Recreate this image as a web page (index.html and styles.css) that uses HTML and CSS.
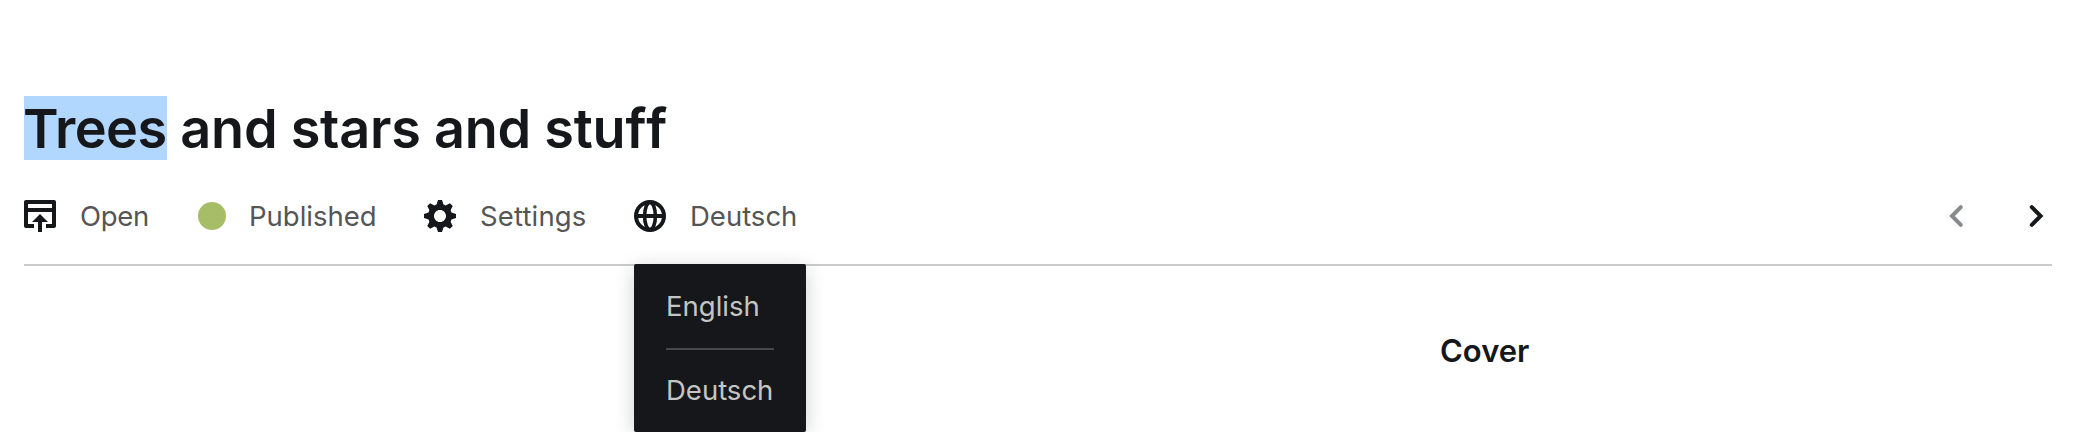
FILE: index.html
```html
<!DOCTYPE html>
<html lang="en">
<head>
<meta charset="utf-8">
<title>Trees and stars and stuff</title>
<link rel="stylesheet" href="styles.css">
</head>
<body>
<header class="header">
  <h1 class="title"><span class="selected">Trees</span> and stars and <span class="title-end">stuff</span></h1>
  <nav class="toolbar">
    <div class="item item-open">
      <svg class="icon" viewBox="0 0 16 16"><path fill-rule="evenodd" d="M15,0H1C0.4,0,0,0.4,0,1v12c0,0.6,0.4,1,1,1h4v-2H2V6h12v6h-3v2h4c0.6,0,1-0.4,1-1V1C16,0.4,15.6,0,15,0z M2,4V2h12v2H2z M8,7l-4,4h3v5h2v-5h3L8,7z"/></svg>
      <span class="label label-open">Open</span>
    </div>
    <div class="item item-status">
      <span class="dot"></span>
      <span class="label label-status">Published</span>
    </div>
    <div class="item item-settings">
      <svg class="icon" viewBox="0 0 16 16"><path fill-rule="evenodd" d="M16,9V7l-2.259-0.753c-0.113-0.372-0.262-0.728-0.444-1.066l1.066-2.131l-1.414-1.414l-2.131,1.065c-0.338-0.182-0.694-0.331-1.066-0.444L9,0H7L6.247,2.259C5.875,2.372,5.519,2.521,5.181,2.703L3.05,1.638L1.638,3.05l1.065,2.131C2.521,5.519,2.372,5.875,2.259,6.247L0,7v2l2.259,0.753c0.113,0.372,0.262,0.728,0.444,1.066L1.638,12.95l1.413,1.413l2.131-1.066c0.338,0.182,0.694,0.331,1.066,0.444L7,16h2l0.753-2.259c0.372-0.113,0.728-0.262,1.066-0.444l2.131,1.066l1.413-1.413l-1.066-2.131c0.182-0.338,0.331-0.694,0.444-1.066L16,9z M8,11c-1.657,0-3-1.343-3-3s1.343-3,3-3s3,1.343,3,3S9.657,11,8,11z"/></svg>
      <span class="label label-settings">Settings</span>
    </div>
    <div class="item item-language">
      <svg class="icon icon-line" viewBox="0 0 16 16"><circle cx="8" cy="8" r="7"/><ellipse class="meridian" cx="8" cy="8" rx="2.7" ry="6.8"/><path d="M1 8h14"/></svg>
      <span class="label label-language">Deutsch</span>
      <ul class="dropdown">
        <li class="option option-english">English</li>
        <li class="option option-deutsch">Deutsch</li>
      </ul>
    </div>
    <div class="pager">
      <svg class="icon icon-chevron disabled" viewBox="0 0 16 16"><path d="M10.4 3.6L6 8l4.4 4.4"/></svg>
      <svg class="icon icon-chevron" viewBox="0 0 16 16"><path d="M5.9 3.6L10.3 8l-4.4 4.4"/></svg>
    </div>
  </nav>
</header>
<main class="content">
  <h2 class="heading">Cover</h2>
</main>
</body>
</html>
```
FILE: styles.css
```css
* { box-sizing: border-box; }
body {
  margin: 0;
  height: 432px;
  overflow: hidden;
  background: #fff;
  color: #16171a;
  font-family: Inter, "Liberation Sans", sans-serif;
}
.header {
  margin: 0 24px;
  padding-top: 96px;
  border-bottom: 2px solid #ccc;
}
.title {
  margin: 0;
  height: 64px;
  font-size: 54px;
  font-weight: 600;
  line-height: 65px;
  letter-spacing: -.25px;
  white-space: nowrap;
}
.title-end {
  letter-spacing: -.2px;
  font-kerning: none;
}
.selected {
  display: inline-block;
  width: 143px;
  height: 64px;
  vertical-align: top;
  letter-spacing: -.55px;
  text-indent: -1px;
  background: #b1d7ff;
}
.toolbar {
  display: flex;
  align-items: center;
  height: 104px;
  padding-top: 8px;
}
.item {
  position: relative;
  display: flex;
  align-items: center;
  height: 96px;
}
.item-open { width: 174px; }
.item-status { width: 226px; }
.item-settings { width: 210px; }
.icon {
  display: block;
  flex: none;
  width: 32px;
  height: 32px;
  fill: #16171a;
}
.icon-line {
  fill: none;
  stroke: #16171a;
  stroke-width: 2;
}
.meridian { stroke-width: 1.8; }
.icon-chevron {
  fill: none;
  stroke: #16171a;
  stroke-width: 2;
  stroke-linecap: round;
}
.disabled { opacity: .5; }
.dot {
  width: 28px;
  height: 28px;
  border-radius: 50%;
  background: #a7bd68;
}
.label {
  margin-left: 24px;
  font-size: 27.5px;
  font-weight: 380;
  line-height: 40px;
  color: #555;
  white-space: nowrap;
}
.label-open { letter-spacing: -.3px; }
.label-status { margin-left: 23px; }
.label-settings { letter-spacing: .15px; }
.dropdown {
  position: absolute;
  top: 96px;
  left: 0;
  z-index: 1;
  width: 172px;
  height: 168px;
  margin: 0;
  padding: 0 32px;
  list-style: none;
  background: #16171a;
  border-radius: 2px;
  box-shadow: 0 4px 20px rgba(22, 23, 26, .2);
}
.option {
  height: 84px;
  font-size: 27.5px;
  font-weight: 380;
  line-height: 84px;
  color: #c4c5c5;
  white-space: nowrap;
}
.option-deutsch {
  border-top: 2px solid #464749;
  line-height: 80px;
}
.pager {
  display: flex;
  gap: 48px;
  margin-left: auto;
}
.content {
  display: grid;
  grid-template-columns: 1440px 1fr;
  padding-top: 65px;
}
.heading {
  grid-column: 2;
  margin: 0;
  font-size: 31px;
  font-weight: 600;
  line-height: 40px;
}
```
